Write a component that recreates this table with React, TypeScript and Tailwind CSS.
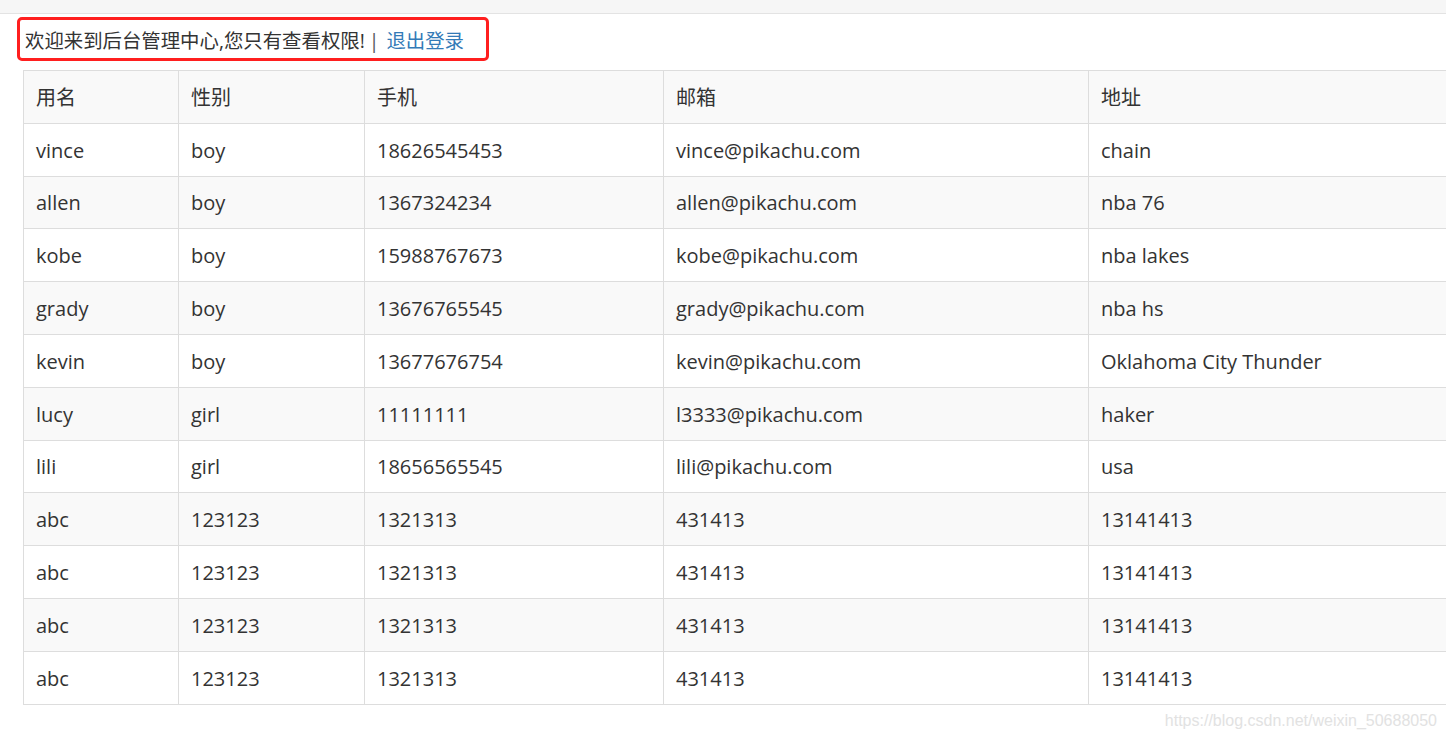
import React from "react";

const rows = [
  ["vince", "boy", "18626545453", "vince@pikachu.com", "chain"],
  ["allen", "boy", "1367324234", "allen@pikachu.com", "nba 76"],
  ["kobe", "boy", "15988767673", "kobe@pikachu.com", "nba lakes"],
  ["grady", "boy", "13676765545", "grady@pikachu.com", "nba hs"],
  ["kevin", "boy", "13677676754", "kevin@pikachu.com", "Oklahoma City Thunder"],
  ["lucy", "girl", "11111111", "l3333@pikachu.com", "haker"],
  ["lili", "girl", "18656565545", "lili@pikachu.com", "usa"],
  ["abc", "123123", "1321313", "431413", "13141413"],
  ["abc", "123123", "1321313", "431413", "13141413"],
  ["abc", "123123", "1321313", "431413", "13141413"],
  ["abc", "123123", "1321313", "431413", "13141413"],
];

const headers = ["用名", "性别", "手机", "邮箱", "地址"];

export default function App() {
  return (
    <div
      className="relative w-[1446px] h-[738px] overflow-hidden bg-white text-[#333] text-[20px]"
      style={{ fontFamily: '"Open Sans", "Noto Sans CJK SC", sans-serif' }}
    >
      {/* top strip */}
      <div className="h-[14px] bg-[#f6f6f6] border-b border-[#e3e3e3]" />

      <div className="pl-[17px] pt-[3px]">
        <div className="flex items-center h-[44px] w-[472px] pl-[5px] pt-[3px] border-[3px] border-[#ff1f1f] rounded-[5px] whitespace-nowrap text-[19.4px]">
          <span>欢迎来到后台管理中心,您只有查看权限!</span>
          <span className="ml-[4px] mr-[7px] text-[#555]">|</span>
          <a className="text-[#337ab7]">退出登录</a>
        </div>
      </div>

      <div className="pl-[23px] pt-[9px]">
        <table className="table-fixed w-[1460px] border-collapse">
          <colgroup>
            <col className="w-[155px]" />
            <col className="w-[186px]" />
            <col className="w-[299px]" />
            <col className="w-[425px]" />
            <col />
          </colgroup>
          <thead>
            <tr className="bg-[#f9f9f9]">
              {headers.map((h) => (
                <th
                  key={h}
                  className="h-[52.8px] px-[12px] pt-[2px] text-left font-normal border border-[#ddd]"
                >
                  {h}
                </th>
              ))}
            </tr>
          </thead>
          <tbody>
            {rows.map((r, i) => (
              <tr key={i} className={i % 2 === 0 ? "bg-white" : "bg-[#f9f9f9]"}>
                {r.map((c, j) => (
                  <td key={j} className="h-[52.8px] px-[12px] pt-[2px] border border-[#ddd] whitespace-nowrap">
                    {c}
                  </td>
                ))}
              </tr>
            ))}
          </tbody>
        </table>
      </div>

      <div
        className="absolute right-[9px] top-[709px] text-[16px] text-[#e2e2e2]"
        style={{ fontFamily: '"Liberation Sans", Arial, sans-serif' }}
      >
        https://blog.csdn.net/weixin_50688050
      </div>
    </div>
  );
}
